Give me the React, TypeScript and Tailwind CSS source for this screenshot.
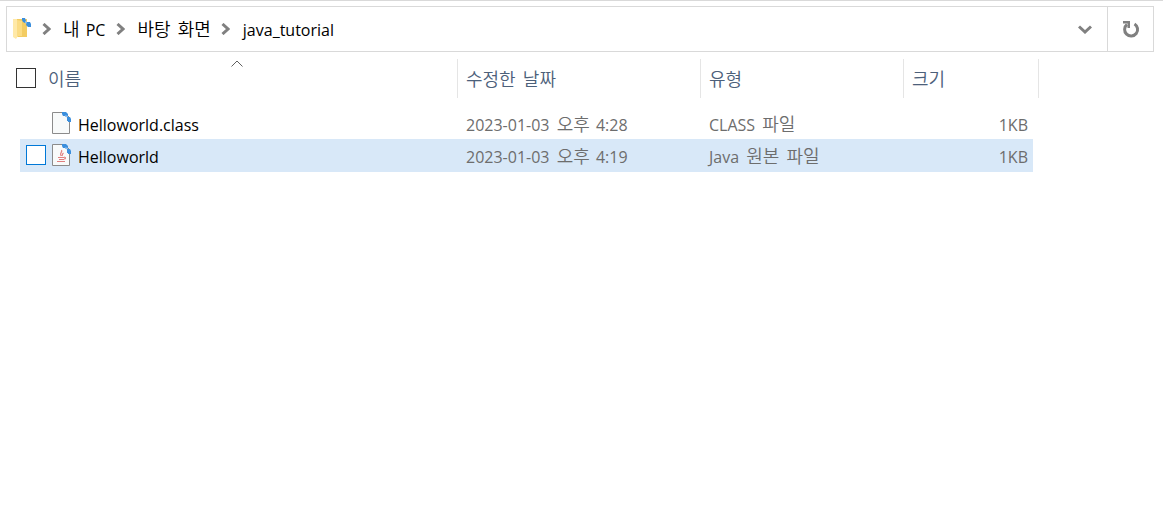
import { Fragment } from "react"

type FileItem = {
  name: string
  modified: string
  type: string
  size: string
  java?: boolean
  selected?: boolean
}

const files: FileItem[] = [
  { name: "Helloworld.class", modified: "2023-01-03 오후 4:28", type: "CLASS 파일", size: "1KB" },
  { name: "Helloworld", modified: "2023-01-03 오후 4:19", type: "Java 원본 파일", size: "1KB", java: true, selected: true },
]

const path = ["내 PC", "바탕 화면", "java_tutorial"]

// Hangul is set a little larger than the Latin text next to it
function Mixed({ children }: { children: string }) {
  return (
    <span>
      {children.split(" ").map((word, i) => (
        <Fragment key={i}>
          {i > 0 && " "}
          {/[가-힣]/.test(word) ? (
            <span className="font-['Noto_Sans_CJK_KR',sans-serif] text-[18px] leading-none font-[350] not-first:ml-[3px]">
              {word}
            </span>
          ) : (
            <span className="not-first:ml-0.5">{word}</span>
          )}
        </Fragment>
      ))}
    </span>
  )
}

function FolderIcon() {
  return (
    <svg width="18" height="24" viewBox="0 0 18 24" className="shrink-0">
      <path d="M4 2h10v18H4z" fill="#f3cc62" />
      <path d="M0 2h4v2l1 1v14l-2 3-3-2z" fill="#ffe9a8" />
      <path d="M4 3l5 1v15H4z" fill="#fbdc84" />
      <path d="M9 1h3l1 3-1 2-2-1-1-2z" fill="#3b8fdd" />
      <path d="M12 4l2 1v2l-2-1z" fill="#8abdf0" />
      <path d="M14 5h3l1 2v3h-3l-2-2z" fill="#3b8fdd" />
    </svg>
  )
}

function FileIcon({ java }: { java?: boolean }) {
  return (
    <svg width="20" height="24" viewBox="0 0 20 24" className="shrink-0">
      <path d="M.5 1.500h12l5 5v16H.5z" fill="#f8fafa" stroke="#8b8b8b" />
      {java && (
        <g fill="none" stroke="#e07f7f" strokeWidth="1.200">
          <path d="M9.500 7c1.500 2-2.500 3-.5 6M11.500 10c-1.500 1-1 2-1.500 3" />
          <path d="M6 14.500h6M7 16.500h5M5 18.500h8" />
          <path d="M12 14c2 0 2 2 0 2" />
        </g>
      )}
      <path d="M10 1h4l2 2v3h-2l-1-1h-2l-1-2z" fill="#3b8fdd" />
      <path d="M13 4l3 1v2l-2-1z" fill="#8abdf0" />
      <path d="M15 6h3l1 2v3h-3v-1h-1z" fill="#3b8fdd" />
    </svg>
  )
}

function Chevron({ down }: { down?: boolean }) {
  return down ? (
    <svg width="14" height="10" viewBox="0 0 14 10" fill="none" stroke="#808080" strokeWidth="3">
      <path d="M1 2.500L7 8l6-5.500" />
    </svg>
  ) : (
    <svg width="9" height="12" viewBox="0 0 9 12" fill="none" stroke="#808080" strokeWidth="3" className="shrink-0">
      <path d="M1.500 1L7 6l-5.500 5" />
    </svg>
  )
}

function AddressBar() {
  return (
    <div className="flex h-[46px] border border-[#d9d9d9]">
      <nav className="flex flex-1 items-center pl-1.5">
        <FolderIcon />
        {path.map((item) => (
          <Fragment key={item}>
            <span className="flex w-8 justify-center pr-0.5">
              <Chevron />
            </span>
            <a href="#" className="pt-0.5 leading-8 whitespace-nowrap text-black">
              <Mixed>{item}</Mixed>
            </a>
          </Fragment>
        ))}
      </nav>
      <button aria-label="이전 위치" className="flex w-11 items-center justify-center">
        <Chevron down />
      </button>
      <button aria-label="새로 고침" className="flex w-[46px] items-center justify-center border-l border-[#d9d9d9]">
        <svg width="18" height="18" viewBox="0 0 18 18" fill="none" stroke="#808080" strokeWidth="3">
          <path d="M12.500 4a6.500 6.500 0 1 1-7.500 .5" />
          <path d="M1 1h7v7H5.500V3.500H1z" fill="#808080" stroke="none" />
        </svg>
      </button>
    </div>
  )
}

export default function App() {
  return (
    <main className="min-h-screen border-t border-[#d9d9d9] bg-white pt-[5px] pr-[9px] pl-1.5 font-['Open_Sans','Noto_Sans_CJK_KR',sans-serif] text-base text-[#6d6d6d]">
      <AddressBar />

      <table className="mt-[7px] ml-2.5 table-fixed border-separate border-spacing-0 text-left whitespace-nowrap">
        <colgroup>
          <col className="w-1" />
          <col className="w-[438px]" />
          <col className="w-[243px]" />
          <col className="w-[203px]" />
          <col className="w-[129px]" />
          <col className="w-1.5" />
        </colgroup>
        <thead>
          <tr className="h-[39px] text-[#4c607a] [&>th]:border-r [&>th]:border-[#e5e5e5] [&>th]:font-normal">
            <th colSpan={2} className="relative p-0">
              <svg width="12" height="7" viewBox="0 0 12 7" fill="none" stroke="#606060" className="absolute top-px left-1/2 -translate-x-1/2">
                <path d="M.5 6.500L6 1l5.500 5.500" />
              </svg>
              <label className="flex items-center gap-3 pb-0.5">
                <input type="checkbox" className="size-5 appearance-none border border-[#333] bg-white" />
                <span className="pt-1">
                  <Mixed>이름</Mixed>
                </span>
              </label>
            </th>
            <th className="p-0 pt-0.5 pl-2"><Mixed>수정한 날짜</Mixed></th>
            <th className="p-0 pt-0.5 pl-2"><Mixed>유형</Mixed></th>
            <th colSpan={2} className="p-0 pt-0.5 pl-2"><Mixed>크기</Mixed></th>
          </tr>
        </thead>
        <tbody className="[&_td]:p-0 [&_td]:align-top">
          <tr className="h-[9px]">
            <td colSpan={6} />
          </tr>
          {files.map((file) => (
            <tr key={file.name} className={file.selected ? "h-[33px] [&>td:not(:first-child,:last-child)]:bg-[#d8e8f8]" : "h-8"}>
              <td />
              <td>
                <label className="flex h-8 items-center pl-1.5 text-black">
                  <input
                    type="checkbox"
                    className={file.selected ? "mr-1.5 size-5 appearance-none border border-[#0078d7] bg-white" : "mr-1.5 size-5 appearance-none"}
                  />
                  <FileIcon java={file.java} />
                  <span className="ml-1.5 pt-1 leading-7">{file.name}</span>
                </label>
              </td>
              <td><div className="pt-1 pl-2 leading-7"><Mixed>{file.modified}</Mixed></div></td>
              <td><div className="pt-1 pl-2 leading-7"><Mixed>{file.type}</Mixed></div></td>
              <td><div className="pt-1 pr-[5px] text-right leading-7">{file.size}</div></td>
              <td />
            </tr>
          ))}
        </tbody>
      </table>
    </main>
  )
}
